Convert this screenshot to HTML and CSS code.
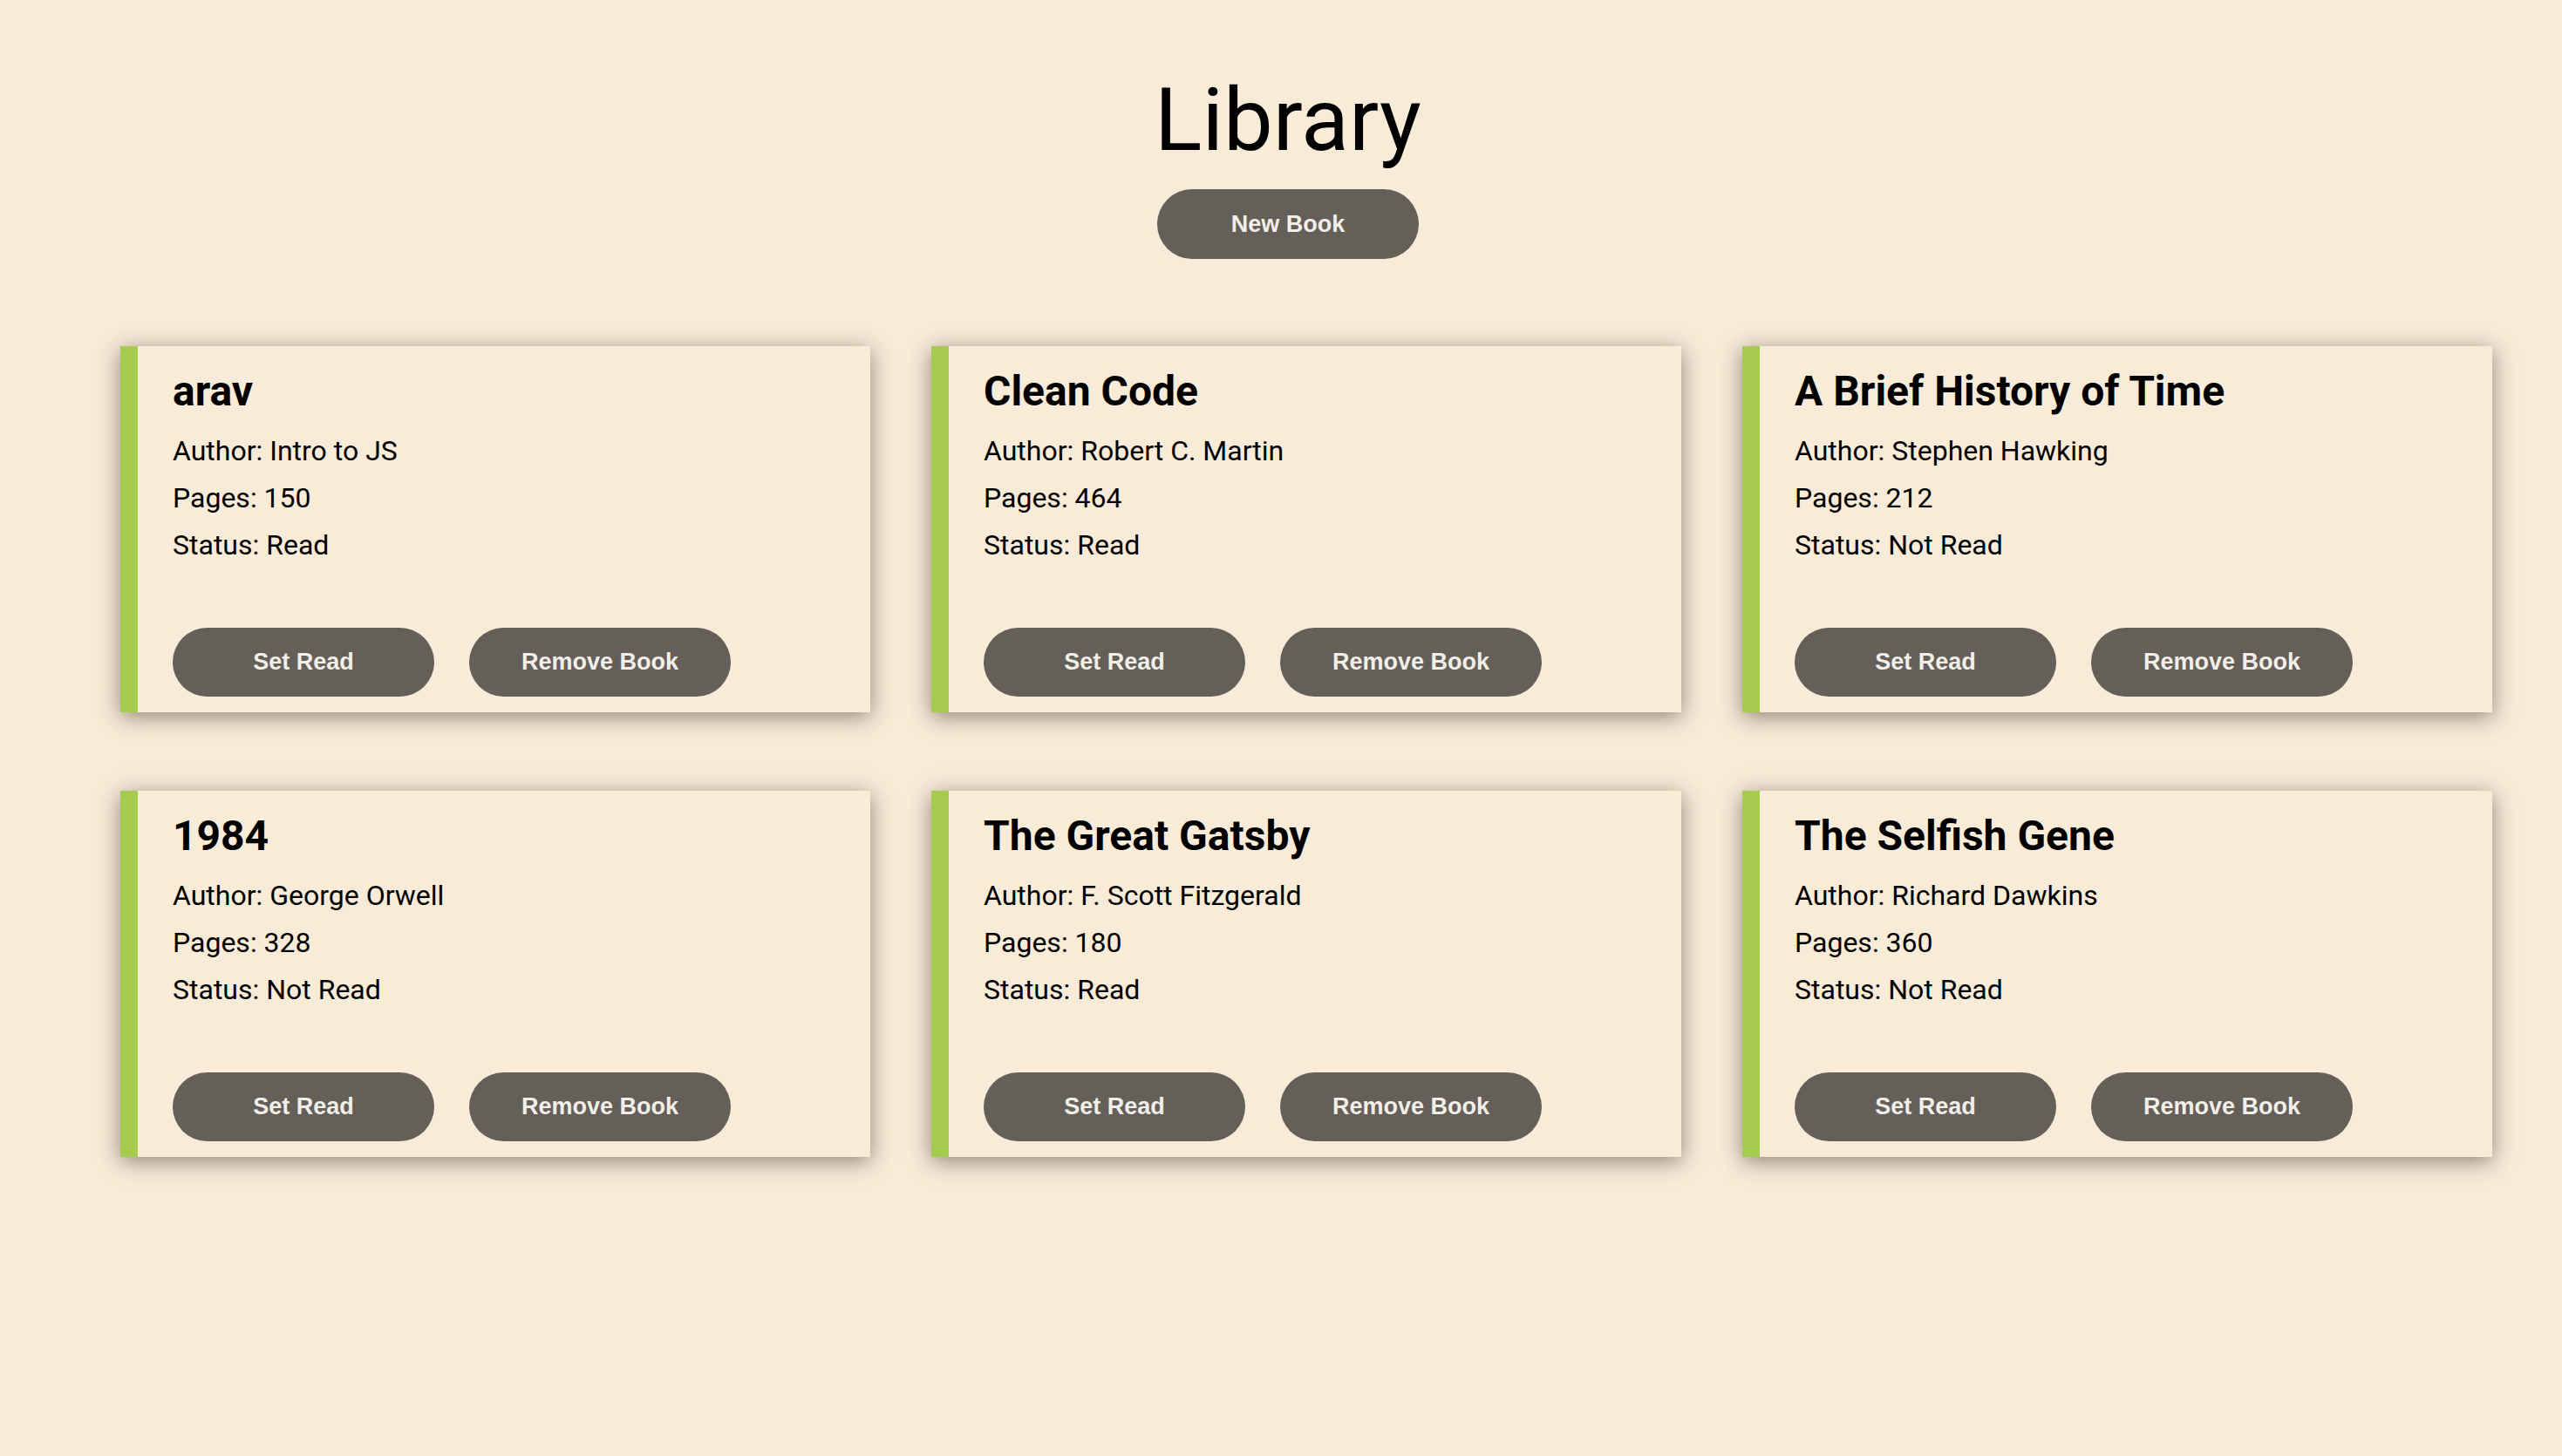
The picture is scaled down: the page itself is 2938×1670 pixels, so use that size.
FILE: index.html
```html
<!DOCTYPE html>
<html lang="en">
<head>
<meta charset="utf-8">
<title>Library</title>
<link rel="stylesheet" href="styles.css">
</head>
<body>
<header class="header">
  <h1 class="header-title">Library</h1>
  <button class="btn btn-new">New Book</button>
</header>
<main class="library">
  <article class="card">
    <h2 class="card-title">arav</h2>
    <p class="card-line">Author: Intro to JS</p>
    <p class="card-line">Pages: 150</p>
    <p class="card-line">Status: Read</p>
    <div class="card-actions">
      <button class="btn">Set Read</button>
      <button class="btn">Remove Book</button>
    </div>
  </article>
  <article class="card">
    <h2 class="card-title">Clean Code</h2>
    <p class="card-line">Author: Robert C. Martin</p>
    <p class="card-line">Pages: 464</p>
    <p class="card-line">Status: Read</p>
    <div class="card-actions">
      <button class="btn">Set Read</button>
      <button class="btn">Remove Book</button>
    </div>
  </article>
  <article class="card">
    <h2 class="card-title">A Brief History of Time</h2>
    <p class="card-line">Author: Stephen Hawking</p>
    <p class="card-line">Pages: 212</p>
    <p class="card-line">Status: Not Read</p>
    <div class="card-actions">
      <button class="btn">Set Read</button>
      <button class="btn">Remove Book</button>
    </div>
  </article>
  <article class="card">
    <h2 class="card-title">1984</h2>
    <p class="card-line">Author: George Orwell</p>
    <p class="card-line">Pages: 328</p>
    <p class="card-line">Status: Not Read</p>
    <div class="card-actions">
      <button class="btn">Set Read</button>
      <button class="btn">Remove Book</button>
    </div>
  </article>
  <article class="card">
    <h2 class="card-title">The Great Gatsby</h2>
    <p class="card-line">Author: F. Scott Fitzgerald</p>
    <p class="card-line">Pages: 180</p>
    <p class="card-line">Status: Read</p>
    <div class="card-actions">
      <button class="btn">Set Read</button>
      <button class="btn">Remove Book</button>
    </div>
  </article>
  <article class="card">
    <h2 class="card-title">The Selfish Gene</h2>
    <p class="card-line">Author: Richard Dawkins</p>
    <p class="card-line">Pages: 360</p>
    <p class="card-line">Status: Not Read</p>
    <div class="card-actions">
      <button class="btn">Set Read</button>
      <button class="btn">Remove Book</button>
    </div>
  </article>
</main>
</body>
</html>
```

FILE: styles.css
```css
* {
  box-sizing: border-box;
}

html, body {
  margin: 0;
  background: #f8ebd8;
}

body {
  font-family: Roboto, "Liberation Sans", sans-serif;
  color: #000;
  min-height: 1670px;
}

.header {
  display: flex;
  flex-direction: column;
  align-items: center;
  padding: 78px 0 0 16px;
}

.header-title {
  margin: 0;
  font-size: 101px;
  font-weight: 400;
  line-height: normal;
}

.btn {
  width: 300px;
  height: 79px;
  border: none;
  border-radius: 40px;
  background: #645f59;
  color: #f2eee8;
  font-family: "Liberation Sans", Arial, sans-serif;
  font-weight: 700;
  font-size: 27px;
  padding: 0;
  cursor: pointer;
}

.btn-new {
  height: 80px;
  margin-top: 20px;
}

.library {
  display: grid;
  grid-template-columns: repeat(3, 860px);
  column-gap: 70px;
  row-gap: 90px;
  margin-top: 100px;
  padding-left: 138px;
}

.card {
  height: 420px;
  display: flex;
  flex-direction: column;
  background: #f8ebd8;
  border-left: 20px solid #a5cb52;
  padding: 23px 40px 18px;
  box-shadow: 0 5px 24px rgba(60, 45, 30, 0.55);
}

.card-title {
  margin: 0 0 21px;
  font-size: 48px;
  font-weight: 700;
  line-height: normal;
}

.card-line {
  margin: 0 0 16px;
  font-size: 32px;
  line-height: normal;
}

.card-actions {
  margin-top: auto;
  display: flex;
  gap: 40px;
}
```
